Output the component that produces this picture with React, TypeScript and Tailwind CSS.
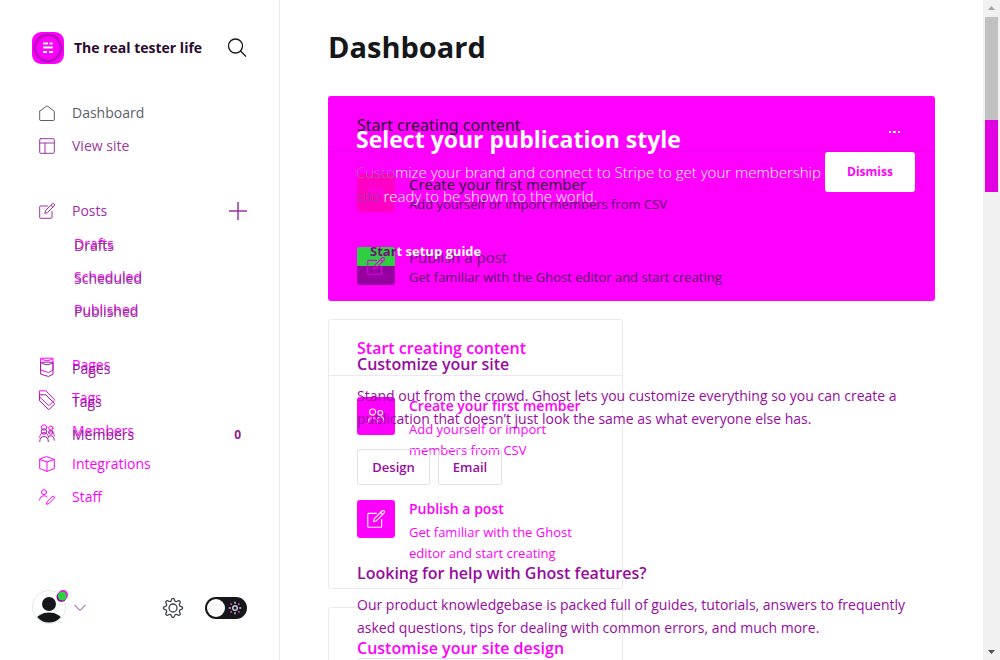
import type { ReactNode } from 'react';

type IconName = 'home' | 'layout' | 'edit' | 'page' | 'tag' | 'members' | 'box' | 'staff';

const shapes: Record<IconName, ReactNode> = {
  home: <path d="M.7 6.2v8.600c0 .4.3.7.7.7h13.200c.4 0 .7-.3.7-.7V6.200L8 .8.700 6.200" />,
  layout: <><rect x=".7" y=".7" width="14.600" height="14.600" rx="1" /><path d="M.7 5h14.600M6 5v10.300" /></>,
  edit: <><path d="M8.500 3H1.400a.7.700 0 0 0-.7.700v10.900c0 .4.3.7.700.7h10.900c.4 0 .7-.3.7-.7V8.500" /><path d="M13.300.9a1.300 1.300 0 0 1 1.900 1.900L8.500 9.500l-2.800.9.900-2.800zM12 2.200 13.800 4" /></>,
  page: <path d="M2 1.200h12v12l-4.500 2.300L2 13.200zM3 2.500l5 1.300 5-1.300" />,
  tag: <path d="M.8.800h6l8.300 8.400c.4.4.4.9 0 1.300l-4.600 4.700c-.4.4-.9.4-1.300 0L.8 7z" />,
  members: <><circle cx="5" cy="4.500" r="2.700" /><circle cx="11.800" cy="5.200" r="2.100" /><path d="M.7 14.500c.2-3 1.800-5 4.300-5s4.200 2 4.400 5M9.400 9.800c.6-.6 1.400-1 2.400-1 2 0 3.300 1.600 3.500 4.300" /></>,
  box: <><path d="M8 .7 15.300 3.500v9L8 15.400.7 12.500v-9z" /><path d="M.7 3.500 8 6l7.300-2.500M8 6v9.400" /></>,
  staff: <><circle cx="5" cy="3.200" r="2.500" /><path d="M.6 11c.3-2.600 2-4.200 4.400-4.200 1.200 0 2.200.4 3 1.100M13.300 7.600a1.200 1.200 0 0 1 1.800 1.700l-5.200 5.300-2.500.7.700-2.500z" /></>,
};

function Icon({ name, className }: { name: IconName; className: string }) {
  return (
    <svg viewBox="0 0 16 16" fill="none" stroke="currentColor" strokeLinejoin="round" strokeLinecap="round" className={`shrink-0 ${className}`} aria-hidden="true">
      {shapes[name]}
    </svg>
  );
}

function NavRow({ icon, label, className, badge }: { icon?: IconName; label: string; className: string; badge?: string }) {
  return (
    <a href="#" className={`flex items-center text-sm ${icon ? 'gap-[17px] pl-[39px]' : 'pl-[74px]'} ${className}`}>
      {icon && <Icon name={icon} className="size-4" />}
      {label}
      {badge && <span className="ml-auto pr-[38px] text-xs font-bold">{badge}</span>}
    </a>
  );
}

function Sidebar() {
  return (
    <aside className="flex w-[280px] shrink-0 flex-col border-r border-[#e5e7e9] pb-[34px]">
      <header className="flex items-center pt-8 pr-8 pl-8 text-[#15171a]">
        <svg viewBox="0 0 32 32" className="size-8" aria-hidden="true">
          <rect width="32" height="32" rx="9" fill="#ff00ff" />
          <circle cx="16" cy="16" r="13.500" fill="none" stroke="#9b159f" strokeWidth="1.500" />
          <circle cx="16" cy="16" r="12" fill="none" stroke="#dc00e0" strokeWidth="1.500" />
          <path d="M11 11.500h5M17.500 11.500h3M11 15.500h10M11 20h4M17 20h4" stroke="#fff" strokeWidth="2" />
        </svg>
        <strong className="ml-[10px] text-sm whitespace-nowrap text-[#2c0930]">The real tester life</strong>
        <button aria-label="Search" className="ml-auto">
          <svg viewBox="0 0 20 20" className="size-5" fill="none" stroke="currentColor" strokeWidth="1.300">
            <circle cx="8.500" cy="8" r="7" />
            <path d="m13.500 13 5.500 5.500" />
          </svg>
        </button>
      </header>

      <nav className="mt-8 grid">
        <div className="col-start-1 row-start-1">
          <NavRow icon="home" label="Dashboard" className="h-[33px] text-[#5b6066]" />
          <NavRow icon="layout" label="View site" className="h-[33px] text-[#9c38a3]" />
          <div className="mt-8 flex items-center pr-[31px]">
            <NavRow icon="edit" label="Posts" className="h-[33px] grow text-[#a52cab]" />
            <button aria-label="New post">
              <svg viewBox="0 0 20 20" className="size-5 text-[#9b35a2]" stroke="currentColor" strokeWidth="1.500"><path d="M1 10h18M10 1v18" /></svg>
            </button>
          </div>
          <NavRow label="Drafts" className="h-[33px] text-[#ff00ff]" />
          <NavRow label="Scheduled" className="h-[33px] text-[#ff00ff]" />
          <NavRow label="Published" className="h-[33px] text-[#ff00ff]" />
          <div className="mt-[22px]">
            <NavRow icon="page" label="Pages" className="h-[33px] text-[#ff00ff]" />
            <NavRow icon="tag" label="Tags" className="h-[33px] text-[#ff00ff]" />
            <NavRow icon="members" label="Members" className="h-[33px] text-[#ff00ff]" />
            <NavRow icon="box" label="Integrations" className="h-[33px] text-[#ff00ff]" />
            <NavRow icon="staff" label="Staff" className="h-[33px] text-[#ff00ff]" />
          </div>
        </div>
        <div className="col-start-1 row-start-1 pt-[133px]">
          <NavRow label="Drafts" className="h-[33px] text-[#8c3c93]" />
          <NavRow label="Scheduled" className="h-[33px] text-[#8c3c93]" />
          <NavRow label="Published" className="h-[33px] text-[#8c3c93]" />
          <div className="mt-6">
            <NavRow icon="page" label="Pages" className="h-[33px] text-[#922098]" />
            <NavRow icon="tag" label="Tags" className="h-[33px] text-[#922098]" />
            <NavRow icon="members" label="Members" badge="0" className="h-[34px] text-[#922098]" />
          </div>
        </div>
      </nav>

      <footer className="mt-auto flex items-center pr-8 pl-8">
        <button aria-label="Account" className="flex items-center text-[#80308a]">
          <svg viewBox="0 0 36 36" className="size-9" aria-hidden="true">
            <clipPath id="face"><circle cx="17" cy="17" r="15.500" /></clipPath>
            <circle cx="17" cy="17" r="16.500" fill="#fff" stroke="#e4e6e8" />
            <g clipPath="url(#face)" fill="#15171a"><circle cx="17" cy="14" r="7" /><ellipse cx="17" cy="31" rx="13" ry="8.500" /></g>
            <circle cx="31" cy="5" r="5" fill="#ff00ff" />
            <circle cx="29.500" cy="7" r="5" fill="#93009b" />
            <circle cx="30.300" cy="6" r="4.500" fill="#30cf43" />
          </svg>
          <svg viewBox="0 0 12 12" className="ml-[6px] size-3" fill="none" stroke="currentColor"><path d="m.5 3 5.500 5.500L11.500 3" /></svg>
        </button>
        <button aria-label="Settings" className="ml-auto">
          <svg viewBox="0 0 22 22" className="size-[22px]" fill="none" stroke="#394047" strokeWidth="1.300" strokeLinejoin="round">
            <circle cx="11" cy="11" r="4" />
            <path d="M9.300 3.300C9.800.7 12.200.7 12.700 3.300c.3 1.300 1.600 1.700 2.600 1 2.200-1.500 3.900.2 2.400 2.400-.7 1-.3 2.300 1 2.600 2.600.5 2.600 2.900 0 3.400-1.300.3-1.700 1.600-1 2.600 1.500 2.200-.2 3.900-2.400 2.400-1-.7-2.300-.3-2.600 1-.5 2.600-2.900 2.600-3.400 0-.3-1.300-1.600-1.700-2.600-1-2.200 1.500-3.900-.2-2.400-2.400.7-1 .3-2.300-1-2.600-2.600-.5-2.600-2.900 0-3.400 1.300-.3 1.700-1.600 1-2.600-1.500-2.200.2-3.900 2.400-2.400 1 .7 2.300.3 2.600-1z" />
          </svg>
        </button>
        <label className="ml-[21px] flex h-[22px] w-[42px] cursor-pointer items-center justify-between rounded-full bg-[#15171a] px-[2px]">
          <input type="checkbox" aria-label="Night shift" className="size-[18px] appearance-none rounded-full bg-white" />
          <svg viewBox="0 0 14 14" className="mr-[3px] size-[14px]" fill="none" stroke="#c9c9ce" strokeWidth="1.500">
            <circle cx="7" cy="7" r="2.300" />
            <path d="M7 .8v2M7 11.200v2M.8 7h2M11.200 7h2" />
            <path d="m2.500 2.500 1.300 1.300m6.400 6.400 1.300 1.300m0-9-1.300 1.300m-6.400 6.400-1.300 1.300" stroke="#ff40ff" />
          </svg>
        </label>
      </footer>
    </aside>
  );
}

function Banner() {
  return (
    <section className="grid overflow-hidden rounded-[3px] bg-[#ff00ff]">
      <div className="col-start-1 row-start-1 text-[#2c0833]">
        <h2 className="flex h-14 items-center border-b border-[#ef00ef] px-[29px] pt-[2px] font-['Noto_Sans',sans-serif] text-base">Start creating content</h2>
        <ul className="flex flex-col gap-8 px-[29px] pt-[22px] pb-[13px]">
          <li className="flex gap-[14px]">
            <span className="flex size-[38px] shrink-0 items-center justify-center rounded-[3px] bg-[#ff00c4] text-[#ff00ff]"><Icon name="members" className="size-[18px]" /></span>
            <div>
              <h3 className="text-[15px] leading-5">Create your first member</h3>
              <p className="text-[13px] leading-[21px] text-[#540f62]">Add yourself or import members from CSV</p>
            </div>
          </li>
          <li className="flex gap-[14px]">
            <span className="flex size-[38px] shrink-0 items-center justify-center rounded-[3px] bg-linear-to-b from-[#30cf43] from-50% to-[#9600a0] to-50% text-[#e500e8]"><Icon name="edit" className="size-[18px]" /></span>
            <div>
              <h3 className="text-[15px] leading-5 text-[#641b6c]">Publish a post</h3>
              <p className="text-[13px] leading-[21px] text-[#540f62]">Get familiar with the Ghost editor and start creating</p>
            </div>
          </li>
        </ul>
      </div>
      <div className="col-start-1 row-start-1 pt-[27px] pl-7 whitespace-nowrap text-white">
        <h2 className="text-[23px] leading-8 font-bold">Select your publication style</h2>
        <p className="mt-[5px] text-[15px] leading-6 font-light">
          <span className="text-[#a966ad]">Custo</span>mize your brand and connect to Stripe to get your membership
          <br />
          <span className="text-[#8c448c]">site</span> ready to be shown to the world.
        </p>
        <a href="#" className="mt-[31px] ml-[14px] inline-block text-[13px] leading-6 font-bold"><span className="text-[#701078]">Star</span>t setup guide</a>
      </div>
      <div className="col-start-1 row-start-1 flex flex-col items-end gap-[18px] justify-self-end pt-[34px] pr-5">
        <button aria-label="More" className="mr-[15px] flex h-1 items-center gap-[2px]">
          <i className="size-[2px] bg-white" /><i className="h-[2px] w-[3px] bg-white" /><i className="size-[2px] bg-white" />
        </button>
        <button className="h-10 w-[90px] rounded-[3px] bg-white text-xs font-bold text-[#ff00ff]">Dismiss</button>
      </div>
    </section>
  );
}

function Step({ icon, title, text }: { icon: IconName; title: string; text: string }) {
  return (
    <li className="flex gap-[14px] text-[#ff00ff]">
      <span className="mt-px flex size-[38px] shrink-0 items-center justify-center rounded-[3px] bg-[#ff00ff] text-white"><Icon name={icon} className="size-[18px]" /></span>
      <div>
        <h3 className="text-sm leading-5 font-semibold whitespace-nowrap">{title}</h3>
        <p className="mt-[3px] text-[13px] leading-[21px]">{text}</p>
      </div>
    </li>
  );
}

function Cards() {
  return (
    <div className="col-start-1 row-start-1 grid grid-cols-2 gap-x-[17px] gap-y-[18px]">
      <section className="col-start-1 rounded-[3px] border border-[#e8eaed] pb-[18px]">
        <h2 className="flex h-14 items-center border-b border-[#e8eaed] px-7 text-base font-semibold text-[#ff00ff]">Start creating content</h2>
        <ul className="flex flex-col gap-[38px] pt-5 pr-9 pl-7">
          <Step icon="members" title="Create your first member" text="Add yourself or import members from CSV" />
          <Step icon="edit" title="Publish a post" text="Get familiar with the Ghost editor and start creating" />
        </ul>
      </section>
      <section className="col-start-1 rounded-[3px] border border-[#e8eaed] px-7 pt-7 pb-7">
        <h2 className="text-base leading-6 font-semibold whitespace-nowrap text-[#ff00ff]">Customise your site design</h2>
      </section>
    </div>
  );
}

function Overview() {
  return (
    <div className="col-start-1 row-start-1 px-[29px] pt-[33px] text-[#970b9f]">
      <h2 className="text-base leading-6 font-semibold">Customize your site</h2>
      <p className="mt-2 text-sm leading-[23px] whitespace-nowrap">
        Stand out from the crowd. Ghost lets you customize everything so you can create a<br />
        publication that doesn’t just look the same as what everyone else has.
      </p>
      <div className="mt-[19px] flex gap-2 text-[13px] font-semibold">
        <button className="h-9 w-[73px] rounded-[3px] border border-[#dfe1e3] pt-[2px]">Design</button>
        <button className="h-9 w-16 rounded-[3px] border border-[#dfe1e3] pt-[2px]">Email</button>
      </div>
      <h2 className="mt-[76px] text-base leading-6 font-semibold">Looking for help with Ghost features?</h2>
      <p className="mt-2 text-sm leading-[23px] whitespace-nowrap">
        Our product knowledgebase is packed full of guides, tutorials, answers to frequently<br />
        asked questions, tips for dealing with common errors, and much more.
      </p>
      <div className="mt-[19px] h-9 w-[172px] rounded-[3px] border border-[#dfe1e3]" />
    </div>
  );
}

export default function App() {
  return (
    <div className="flex h-screen overflow-hidden bg-white font-['Open_Sans','Noto_Sans',sans-serif]">
      <Sidebar />
      <main className="min-w-0 grow overflow-hidden px-12 pt-[27px]">
        <h1 className="text-[29px] leading-10 font-bold text-[#15171a]">Dashboard</h1>
        <div className="mt-[29px]"><Banner /></div>
        <div className="mt-[18px] grid">
          <Cards />
          <Overview />
        </div>
      </main>
      <div className="flex w-[17px] shrink-0 flex-col items-center bg-[#f1f1f1]" aria-hidden="true">
        <svg viewBox="0 0 17 17" className="size-[17px] shrink-0" fill="#a3a3a3"><path d="m5 10 3.500-4 3.500 4z" /></svg>
        <div className="h-[103px] w-[13px] bg-[#c1c1c1]" />
        <div className="h-[72px] w-[13px] bg-[#e100e1]" />
        <svg viewBox="0 0 17 17" className="mt-auto size-[17px] shrink-0" fill="#505050"><path d="m5 7 3.500 4L12 7z" /></svg>
      </div>
    </div>
  );
}
